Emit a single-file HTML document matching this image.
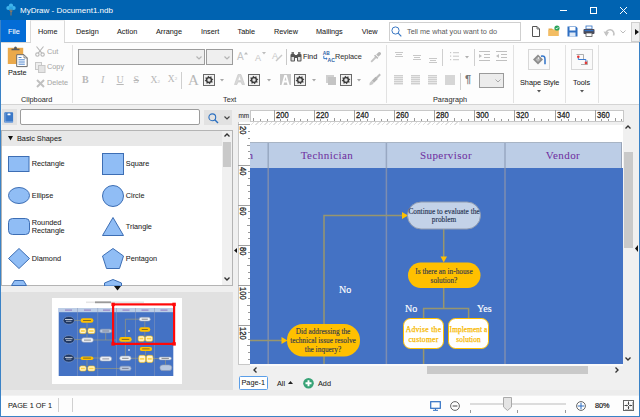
<!DOCTYPE html>
<html><head><meta charset="utf-8">
<style>
*{box-sizing:border-box;margin:0;padding:0}
html,body{width:640px;height:417px;overflow:hidden;background:#f0f0f0;font-family:"Liberation Sans",sans-serif}
.a{position:absolute}
.t{position:absolute;white-space:nowrap;font-family:"Liberation Sans",sans-serif;font-size:7.3px;line-height:10px;color:#444;-webkit-text-stroke:.05px currentColor}
.s{position:absolute;white-space:nowrap;font-family:"Liberation Serif",serif;line-height:10px}
svg{position:absolute;overflow:visible}
</style></head><body>
<!-- ============ TITLE BAR ============ -->
<div class="a" style="left:0;top:0;width:640px;height:20px;background:#0063b1"></div>
<svg style="left:6px;top:3px" width="10" height="13" viewBox="0 0 10 13"><circle cx="5" cy="2.6" r="2.1" fill="#3fb4ec"/><circle cx="2.4" cy="5" r="2.1" fill="#3fb4ec"/><circle cx="7.6" cy="5" r="2.1" fill="#3fb4ec"/><circle cx="5" cy="5.6" r="2" fill="#2aa2e0"/><path d="M5 6.5V12.5M5 8.5L3.4 7.3M5 9L6.6 7.8" stroke="#9a7a5a" stroke-width="1" fill="none"/></svg>
<div class="t" style="left:20px;top:6px;font-size:8px;color:#fff;-webkit-text-stroke:0">MyDraw - Document1.ndb</div>
<div class="a" style="left:560px;top:10px;width:7px;height:1px;background:#fff"></div>
<div class="a" style="left:590px;top:7px;width:7px;height:7px;border:1px solid #fff"></div>
<svg style="left:620px;top:7px" width="7" height="7" viewBox="0 0 7 7"><path d="M0 0L7 7M7 0L0 7" stroke="#fff" stroke-width="1"/></svg>

<!-- ============ TAB ROW ============ -->
<div class="a" style="left:0;top:20px;width:640px;height:22px;background:#fff"></div>
<div class="a" style="left:0;top:20px;width:26px;height:22px;background:#036cd6"></div>
<div class="t" style="left:8px;top:27px;color:#fff">File</div>
<div class="a" style="left:30px;top:20px;width:35px;height:23px;background:#fdfdfd;border:1px solid #dadada;border-top-color:#eee;border-bottom:none"></div>
<div class="t" style="left:38px;top:27px;color:#222">Home</div>
<div class="t" style="left:76px;top:27px;color:#222">Design</div>
<div class="t" style="left:117px;top:27px;color:#222">Action</div>
<div class="t" style="left:156px;top:27px;color:#222">Arrange</div>
<div class="t" style="left:201px;top:27px;color:#222">Insert</div>
<div class="t" style="left:237.6px;top:27px;color:#222">Table</div>
<div class="t" style="left:274px;top:27px;color:#222">Review</div>
<div class="t" style="left:316px;top:27px;color:#222">Mailings</div>
<div class="t" style="left:361.8px;top:27px;color:#222">View</div>
<!-- search -->
<div class="a" style="left:389px;top:22px;width:132px;height:19px;background:#fff;border:1px solid #cfcfcf"></div>
<svg style="left:391px;top:26px" width="11" height="11" viewBox="0 0 11 11"><circle cx="4.5" cy="4.5" r="3.6" fill="none" stroke="#3a78c4" stroke-width="1"/><path d="M7.2 7.2L10.3 10.3" stroke="#3a78c4" stroke-width="1.2"/></svg>
<div class="t" style="left:407px;top:27px;color:#5a5a5a;-webkit-text-stroke:0">Tell me what you want to do</div>
<!-- QAT -->
<svg style="left:531px;top:26px" width="10" height="11" viewBox="0 0 10 11"><path d="M1.5 .5H6L8.5 3V10.5H1.5Z" fill="#fff" stroke="#555" stroke-width="1"/><path d="M6 .5V3H8.5" fill="none" stroke="#555" stroke-width=".8"/></svg>
<svg style="left:548px;top:25px" width="12" height="12" viewBox="0 0 12 12"><path d="M0.5 3.5H4L5 4.5H10.5V11H0.5Z" fill="#e8a94a"/><path d="M0.5 5H10.5V11H0.5Z" fill="#f3bd63"/><circle cx="9" cy="3" r="2.6" fill="#2aa35c"/><path d="M7.8 3L8.7 3.9L10.3 2.2" stroke="#fff" stroke-width=".9" fill="none"/></svg>
<svg style="left:567px;top:26px" width="11" height="11" viewBox="0 0 11 11"><path d="M.5 .5H9L10.5 2V10.5H.5Z" fill="#2f6fc2"/><rect x="2.5" y="1" width="6" height="3.5" fill="#fff"/><rect x="2.5" y="6.5" width="6" height="4" fill="#dfe9f6"/></svg>
<svg style="left:583px;top:25px" width="12" height="12" viewBox="0 0 12 12"><rect x="3" y="1" width="6" height="3" fill="#fff" stroke="#2f6fc2" stroke-width=".8"/><rect x=".5" y="4" width="11" height="5" rx="1" fill="#4a4a5a"/><rect x="1.5" y="5" width="9" height="1.2" fill="#2f6fc2"/><rect x="3" y="8" width="6" height="3.5" fill="#fff" stroke="#555" stroke-width=".8"/></svg>
<svg style="left:603px;top:27px" width="12" height="10" viewBox="0 0 12 10"><path d="M3 7.5A4 4 0 1 1 10.5 8.5" fill="none" stroke="#c4c4c4" stroke-width="1.6"/><path d="M0.5 4.5L3.5 9.5L6 5Z" fill="#c4c4c4"/></svg>
<svg style="left:620px;top:30px" width="6" height="4" viewBox="0 0 6 4"><path d="M.5 .5L3 3L5.5 .5" fill="none" stroke="#bbb" stroke-width="1"/></svg>
<div class="a" style="left:631px;top:22px;width:9px;height:20px;background:#f0f0f0;border:1px solid #cfcfcf"></div>
<svg style="left:635px;top:29px" width="4" height="6" viewBox="0 0 4 6"><path d="M0 0L4 3L0 6Z" fill="#111"/></svg>

<!-- ============ RIBBON BODY ============ -->
<div class="a" style="left:0;top:42px;width:640px;height:63px;background:#fdfdfd;border-top:1px solid #d4d4d4;border-bottom:1px solid #d4d4d4"></div>


<!-- home tab merges into ribbon -->
<div class="a" style="left:31px;top:42px;width:33px;height:1px;background:#fdfdfd"></div>
<!-- group separators -->
<div class="a" style="left:72px;top:45px;width:1px;height:58px;background:#e2e2e2"></div>
<div class="a" style="left:386px;top:45px;width:1px;height:58px;background:#e2e2e2"></div>
<div class="a" style="left:513px;top:45px;width:1px;height:58px;background:#e2e2e2"></div>
<div class="a" style="left:565px;top:45px;width:1px;height:58px;background:#e2e2e2"></div>
<div class="a" style="left:598px;top:45px;width:1px;height:58px;background:#e2e2e2"></div>

<!-- Clipboard -->
<svg style="left:7px;top:46px" width="22" height="22" viewBox="0 0 22 22"><rect x=".8" y="1.8" width="15.4" height="16.2" fill="#eaa94b"/><path d="M4.5 4.2H12.5V2.8H10Q10 .6 8.5 .6Q7 .6 7 2.8H4.5Z" fill="#5a5a5a"/><path d="M9.7 8.7H17L20.2 11.9V20.6H9.7Z" fill="#fff" stroke="#6a6a6a" stroke-width="1"/><path d="M17 8.7V11.9H20.2" fill="none" stroke="#6a6a6a" stroke-width=".8"/><path d="M11.5 11.5H14.5M11.5 13.8H17.8M11.5 16H17.8M11.5 18.2H17.8" stroke="#3b78c8" stroke-width=".9"/></svg>
<div class="t" style="left:8px;top:68px;color:#222">Paste</div>
<svg style="left:35px;top:46px" width="10" height="11" viewBox="0 0 10 11"><path d="M1.5 .5L6.8 7.2M8.5 .5L3.2 7.2" stroke="#b8b8b8" stroke-width="1.1"/><circle cx="2.4" cy="8.6" r="1.7" fill="none" stroke="#b8b8b8" stroke-width="1.1"/><circle cx="7.6" cy="8.6" r="1.7" fill="none" stroke="#b8b8b8" stroke-width="1.1"/></svg>
<div class="t" style="left:47px;top:47px;color:#a8a8a8">Cut</div>
<svg style="left:35px;top:62px" width="11" height="11" viewBox="0 0 11 11"><rect x=".5" y=".5" width="6" height="7" fill="#eee" stroke="#c8c8c8"/><rect x="3.5" y="3.5" width="6.5" height="7" fill="#e4e4e4" stroke="#c8c8c8"/></svg>
<div class="t" style="left:47px;top:62px;color:#a8a8a8">Copy</div>
<svg style="left:36px;top:79px" width="9" height="9" viewBox="0 0 9 9"><path d="M1 1L8 8M8 1L1 8" stroke="#c0c0c0" stroke-width="2"/></svg>
<div class="t" style="left:47px;top:78px;color:#a8a8a8">Delete</div>
<div class="t" style="left:21px;top:94.8px;color:#333">Clipboard</div>

<!-- Text group -->
<div class="a" style="left:78px;top:49px;width:127px;height:16px;background:#efefef;border:1px solid #9c9c9c"></div>
<svg style="left:196px;top:56px" width="6" height="4" viewBox="0 0 6 4"><path d="M.5 .5L3 3L5.5 .5" fill="none" stroke="#b4b4b4" stroke-width="1.2"/></svg>
<div class="a" style="left:206px;top:49px;width:27px;height:16px;background:#efefef;border:1px solid #9c9c9c"></div>
<svg style="left:224px;top:56px" width="6" height="4" viewBox="0 0 6 4"><path d="M.5 .5L3 3L5.5 .5" fill="none" stroke="#b4b4b4" stroke-width="1.2"/></svg>
<div class="s" style="left:237px;top:52px;font-family:'Liberation Sans';font-size:10px;color:#c4c4c4">A</div>
<svg style="left:243.5px;top:52px" width="4" height="3" viewBox="0 0 4 3"><path d="M0 2.5H4L2 0Z" fill="#bdbdbd"/></svg>
<div class="s" style="left:255px;top:53px;font-family:'Liberation Sans';font-size:9px;color:#c4c4c4">A</div>
<svg style="left:261.5px;top:52px" width="4" height="3" viewBox="0 0 4 3"><path d="M0 0H4L2 2.5Z" fill="#bdbdbd"/></svg>
<svg style="left:272px;top:51px" width="11" height="11" viewBox="0 0 11 11"><text x="0" y="8" font-family="Liberation Sans" font-size="9" fill="#c8c8c8">A</text><path d="M4 10L10 4" stroke="#c8c8c8" stroke-width="1.5"/></svg>
<div class="a" style="left:286px;top:49px;width:1px;height:16px;background:#c8c8c8"></div>
<svg style="left:290px;top:51px" width="12" height="11" viewBox="0 0 12 11"><rect x="0.5" y="3" width="4.5" height="7.5" rx="1" fill="#555"/><rect x="7" y="3" width="4.5" height="7.5" rx="1" fill="#555"/><rect x="4" y="4" width="4" height="3" fill="#555"/><rect x="1.5" y="1" width="2.5" height="2" fill="#777"/><rect x="8" y="1" width="2.5" height="2" fill="#777"/><rect x="1.5" y="6" width="2.5" height="3.5" fill="#ddd"/><rect x="8" y="6" width="2.5" height="3.5" fill="#ddd"/></svg>
<div class="t" style="left:303px;top:52px;color:#222">Find</div>
<svg style="left:322px;top:49px" width="14" height="14" viewBox="0 0 14 14"><text x="0.8" y="5.6" font-family="Liberation Sans" font-size="5.6" font-weight="bold" fill="#2d5fa6" textLength="7" lengthAdjust="spacingAndGlyphs">AB</text><text x="5.6" y="12.8" font-family="Liberation Sans" font-size="5.6" font-weight="bold" fill="#2d5fa6" textLength="7.4" lengthAdjust="spacingAndGlyphs">AC</text><path d="M1.8 6.8V9.6H4.4" fill="none" stroke="#3a78c8" stroke-width="1"/><path d="M4 8.2L5.6 9.6L4 11Z" fill="#3a78c8"/></svg>
<div class="t" style="left:335px;top:52px;color:#333">Replace</div>
<svg style="left:370px;top:50px" width="11" height="13" viewBox="0 0 11 13"><path d="M1.2 11.8L6 7" stroke="#c4c4c4" stroke-width="1.8"/><path d="M4.6 5.2L7.8 8.4" stroke="#b8b8b8" stroke-width="1.6"/><path d="M6.2 4.6L8.6 2.2A1.6 1.6 0 0 1 10.8 4.4L8.4 6.8Z" fill="#b8b8b8"/></svg>

<div class="s" style="left:82px;top:75.4px;font-size:10px;font-weight:bold;color:#b8b8b8">B</div>
<div class="s" style="left:101px;top:75.4px;font-size:10px;font-style:italic;color:#b8b8b8">I</div>
<div class="s" style="left:116.5px;top:75.4px;font-size:10px;text-decoration:underline;color:#b8b8b8">U</div>
<div class="s" style="left:133.5px;top:75.4px;font-size:10px;text-decoration:line-through;color:#b8b8b8">S</div>
<div class="s" style="left:150.5px;top:75.4px;font-size:9.5px;color:#b8b8b8">X<span style="font-size:5px">2</span></div>
<div class="s" style="left:167.8px;top:74.4px;font-size:9.5px;color:#b8b8b8">X<span style="font-size:5px;vertical-align:top">2</span></div>
<div class="a" style="left:181px;top:72px;width:1px;height:17px;background:#cfcfcf"></div>

<svg style="left:203px;top:74px" width="12" height="12" viewBox="0 0 12 12"><rect x=".5" y=".5" width="11" height="11" fill="#f2f2f2" stroke="#6a6a6a"/><polygon points="10.32,5.14 9.04,6.60 9.66,8.44 7.72,8.58 6.86,10.32 5.40,9.04 3.56,9.66 3.42,7.72 1.68,6.86 2.96,5.40 2.34,3.56 4.28,3.42 5.14,1.68 6.60,2.96 8.44,2.34 8.58,4.28" fill="#3a3a3a"/><circle cx="6" cy="6" r="1.7" fill="#e4e4e4"/></svg><svg style="left:220px;top:79px" width="4" height="3" viewBox="0 0 4 3"><path d="M0 0H4L2 2.5Z" fill="#a8a8a8"/></svg><svg style="left:234px;top:74px" width="11" height="11" viewBox="0 0 11 11"><path d="M0.5 10.5L4 .5H7L10.5 10.5H8L7.2 8H3.8L3 10.5Z" fill="#d8d8d8" stroke="#c4c4c4" stroke-width=".6"/><path d="M4.4 6H6.6L5.5 2.5Z" fill="#fff"/></svg><svg style="left:248px;top:74px" width="12" height="12" viewBox="0 0 12 12"><rect x=".5" y=".5" width="11" height="11" fill="#f2f2f2" stroke="#6a6a6a"/><polygon points="10.32,5.14 9.04,6.60 9.66,8.44 7.72,8.58 6.86,10.32 5.40,9.04 3.56,9.66 3.42,7.72 1.68,6.86 2.96,5.40 2.34,3.56 4.28,3.42 5.14,1.68 6.60,2.96 8.44,2.34 8.58,4.28" fill="#3a3a3a"/><circle cx="6" cy="6" r="1.7" fill="#e4e4e4"/></svg><svg style="left:267px;top:79px" width="4" height="3" viewBox="0 0 4 3"><path d="M0 0H4L2 2.5Z" fill="#a8a8a8"/></svg><svg style="left:280px;top:74px" width="11" height="11" viewBox="0 0 11 11"><rect x="0" y="0" width="11" height="11" fill="#c8c8c8"/><path d="M1.5 11L4.3 1H6.7L9.5 11H7.5L6.9 8.5H4.1L3.5 11Z" fill="#fff"/><path d="M4.5 6.5H6.5L5.5 3Z" fill="#c8c8c8"/></svg><svg style="left:294px;top:74px" width="12" height="12" viewBox="0 0 12 12"><rect x=".5" y=".5" width="11" height="11" fill="#f2f2f2" stroke="#6a6a6a"/><polygon points="10.32,5.14 9.04,6.60 9.66,8.44 7.72,8.58 6.86,10.32 5.40,9.04 3.56,9.66 3.42,7.72 1.68,6.86 2.96,5.40 2.34,3.56 4.28,3.42 5.14,1.68 6.60,2.96 8.44,2.34 8.58,4.28" fill="#3a3a3a"/><circle cx="6" cy="6" r="1.7" fill="#e4e4e4"/></svg><svg style="left:312px;top:79px" width="4" height="3" viewBox="0 0 4 3"><path d="M0 0H4L2 2.5Z" fill="#a8a8a8"/></svg><div class="a" style="left:326px;top:75px;width:8px;height:8px;background:#d0d0d0"></div><div class="a" style="left:328px;top:77px;width:8px;height:8px;background:#c4c4c4"></div><svg style="left:340px;top:74px" width="12" height="12" viewBox="0 0 12 12"><rect x=".5" y=".5" width="11" height="11" fill="#f2f2f2" stroke="#6a6a6a"/><polygon points="10.32,5.14 9.04,6.60 9.66,8.44 7.72,8.58 6.86,10.32 5.40,9.04 3.56,9.66 3.42,7.72 1.68,6.86 2.96,5.40 2.34,3.56 4.28,3.42 5.14,1.68 6.60,2.96 8.44,2.34 8.58,4.28" fill="#3a3a3a"/><circle cx="6" cy="6" r="1.7" fill="#e4e4e4"/></svg><svg style="left:357px;top:79px" width="4" height="3" viewBox="0 0 4 3"><path d="M0 0H4L2 2.5Z" fill="#a8a8a8"/></svg><svg style="left:369px;top:73px" width="12" height="13" viewBox="0 0 12 13"><path d="M11.2 1.2L7.2 5.2" stroke="#bdbdbd" stroke-width="2"/><path d="M6.6 3.8L8.8 6L5 9.8L2.8 7.6Z" fill="#b4b4b4"/><path d="M2.8 7.6L5 9.8Q3.5 12.5 .5 12.2Q.2 9.5 2.8 7.6Z" fill="#cacaca"/></svg><div class="s" style="left:188px;top:73px;font-size:15px;line-height:14px;color:#b8b8b8">A</div><div class="t" style="left:223px;top:94.8px;color:#333">Text</div><div class="a" style="left:394.5px;top:52px;width:8px;height:1px;background:#c8c8c8"></div><div class="a" style="left:395.5px;top:54px;width:6px;height:1px;background:#c8c8c8"></div><div class="a" style="left:394.5px;top:56px;width:8px;height:1px;background:#c8c8c8"></div><div class="a" style="left:412.5px;top:55px;width:8px;height:1px;background:#c8c8c8"></div><div class="a" style="left:413.5px;top:57px;width:6px;height:1px;background:#c8c8c8"></div><div class="a" style="left:412.5px;top:59px;width:8px;height:1px;background:#c8c8c8"></div><div class="a" style="left:428.5px;top:58px;width:8px;height:1px;background:#c8c8c8"></div><div class="a" style="left:429.5px;top:60px;width:6px;height:1px;background:#c8c8c8"></div><div class="a" style="left:428.5px;top:62px;width:8px;height:1px;background:#c8c8c8"></div><div class="a" style="left:442px;top:49px;width:1px;height:17px;background:#cfcfcf"></div><svg style="left:450px;top:51px" width="9" height="10" viewBox="0 0 9 10"><g fill="#c8c8c8"><rect x="0" y="1" width="1.2" height="1.2"/><rect x="0" y="4.5" width="1.2" height="1.2"/><rect x="0" y="8" width="1.2" height="1.2"/><rect x="3" y="1.2" width="6" height="1"/><rect x="3" y="4.7" width="6" height="1"/><rect x="3" y="8.2" width="6" height="1"/></g></svg><svg style="left:465px;top:56px" width="4" height="3" viewBox="0 0 4 3"><path d="M0 0H4L2 2.5Z" fill="#b0b0b0"/></svg><div class="a" style="left:474px;top:49px;width:1px;height:17px;background:#cfcfcf"></div><svg style="left:479px;top:51px" width="12" height="10" viewBox="0 0 12 10"><g fill="#c0c0c0"><rect x="0" y="0" width="11" height="1"/><rect x="5" y="3" width="6" height="1"/><rect x="5" y="6" width="6" height="1"/><rect x="0" y="9" width="11" height="1"/><path d="M0 3L3 5L0 7Z"/></g></svg><svg style="left:496px;top:51px" width="12" height="10" viewBox="0 0 12 10"><g fill="#c0c0c0"><rect x="0" y="0" width="11" height="1"/><rect x="5" y="3" width="6" height="1"/><rect x="5" y="6" width="6" height="1"/><rect x="0" y="9" width="11" height="1"/><path d="M3 3L0 5L3 7Z"/></g></svg><div class="a" style="left:394px;top:75px;width:9px;height:10px;background:repeating-linear-gradient(#cfcfcf 0 1px,#e8e8e8 1px 2px)"></div><div class="a" style="left:411px;top:75px;width:9px;height:10px;background:repeating-linear-gradient(#cfcfcf 0 1px,#e8e8e8 1px 2px)"></div><div class="a" style="left:428px;top:75px;width:9px;height:10px;background:repeating-linear-gradient(#cfcfcf 0 1px,#e8e8e8 1px 2px)"></div><div class="a" style="left:445px;top:75px;width:10px;height:10px;background:#d6d6d6"></div><div class="a" style="left:460px;top:73px;width:1px;height:17px;background:#cfcfcf"></div><div class="s" style="left:465px;top:74px;font-family:'Liberation Sans';font-size:11px;font-weight:bold;color:#777">¶</div><div class="a" style="left:479px;top:73px;width:25px;height:15px;background:#ececec;border:1px solid #9a9a9a"></div><svg style="left:495px;top:79px" width="6" height="4" viewBox="0 0 6 4"><path d="M.5 .5L3 3L5.5 .5" fill="none" stroke="#aaa" stroke-width="1"/></svg><div class="t" style="left:433px;top:94.8px;color:#333">Paragraph</div><div class="a" style="left:528px;top:49px;width:22px;height:21px;background:#fafafa;border:1px solid #d8d8d8"></div><svg style="left:528px;top:49px" width="22" height="21" viewBox="528 49 22 21"><path d="M538 54.5L543 59.5L538 64.5L533 59.5Z" fill="#8c8c8c"/><path d="M538 57L540.5 59.5L538 62L535.5 59.5Z" fill="#b8b8b8"/><circle cx="538.6" cy="58" r=".7" fill="#fff"/><path d="M541 56.2Q545 55.2 545 59.2V64.2" fill="none" stroke="#2f72c8" stroke-width="1.5"/></svg><div class="t" style="left:520px;top:78px;color:#222">Shape Style</div><svg style="left:537px;top:90px" width="4" height="3" viewBox="0 0 4 3"><path d="M0 0H4L2 2.5Z" fill="#555"/></svg><div class="a" style="left:571px;top:49px;width:22px;height:21px;background:#fafafa;border:1px solid #d8d8d8"></div><svg style="left:571px;top:49px" width="22" height="21" viewBox="571 49 22 21"><path d="M576.5 54.5H583.5V59.5M581 64.5H587.5V60.5" fill="none" stroke="#9a9a9a" stroke-width=".8"/><path d="M578.3 57V59.5H585.9V62.8" fill="none" stroke="#3a7ad0" stroke-width="1"/><circle cx="578.3" cy="56.8" r="1.3" fill="#e53935"/><circle cx="585.9" cy="62.9" r="1.3" fill="#e53935"/></svg><div class="t" style="left:573px;top:78px;color:#222">Tools</div><svg style="left:580px;top:90px" width="4" height="3" viewBox="0 0 4 3"><path d="M0 0H4L2 2.5Z" fill="#555"/></svg>

<!-- ============ LEFT PANEL ============ -->

<!-- background of left area -->
<div class="a" style="left:1px;top:105px;width:231px;height:290px;background:#f0f0f0"></div>
<!-- book button -->
<div class="a" style="left:2px;top:109px;width:15px;height:16px;background:#e2e2e2"></div>
<svg style="left:4px;top:112px" width="10" height="11" viewBox="0 0 10 11"><rect x=".3" y=".2" width="8.8" height="10.6" rx=".8" fill="#3a78c8"/><rect x="3.5" y="1.6" width="3" height="1.6" rx=".5" fill="#fff"/><rect x="1.3" y="1" width=".8" height="9" fill="#6a9ad8"/><rect x="1" y="9.6" width="8" height=".9" fill="#a8c4ec"/></svg>
<!-- search input -->
<div class="a" style="left:20px;top:109px;width:180px;height:16px;background:#fff;border:1px solid #9c9c9c;border-radius:2px"></div>
<div class="a" style="left:204px;top:110px;width:28px;height:15px;background:#e2e2e2"></div>
<svg style="left:208px;top:113px" width="11" height="11" viewBox="0 0 11 11"><circle cx="4.3" cy="4.3" r="3.4" fill="none" stroke="#2a6fc0" stroke-width="1.1"/><path d="M6.8 6.8L10 10" stroke="#2a6fc0" stroke-width="1.4"/></svg>
<svg style="left:224px;top:116px" width="6" height="4" viewBox="0 0 6 4"><path d="M.5 .5L3 3L5.5 .5" fill="none" stroke="#444" stroke-width="1.2"/></svg>

<!-- shapes panel -->
<div class="a" style="left:1px;top:130px;width:232px;height:156px;background:#fff;border:1px solid #b4b4b4"></div>
<div class="a" style="left:2px;top:131px;width:220px;height:15px;background:#e8e8e8"></div>
<svg style="left:8px;top:136px" width="5" height="5" viewBox="0 0 5 5"><path d="M0 0H5L2.5 4.5Z" fill="#111"/></svg>
<div class="t" style="left:17px;top:134px;color:#222">Basic Shapes</div>
<!-- scrollbar -->
<div class="a" style="left:222px;top:131px;width:10px;height:154px;background:#f0f0f0"></div>
<svg style="left:224px;top:133px" width="6" height="4" viewBox="0 0 6 4"><path d="M.5 3.5L3 1L5.5 3.5" fill="none" stroke="#333" stroke-width="1.35"/></svg>
<div class="a" style="left:223px;top:142px;width:8px;height:25px;background:#c9c9c9"></div>
<svg style="left:224px;top:277px" width="6" height="4" viewBox="0 0 6 4"><path d="M.5 .5L3 3L5.5 .5" fill="none" stroke="#333" stroke-width="1.35"/></svg>

<!-- shapes -->
<svg style="left:8px;top:156px" width="22" height="16" viewBox="0 0 22 16"><rect x=".5" y=".5" width="20.5" height="15" fill="#90bdf5" stroke="#3d6eb4"/></svg>
<div class="t" style="left:31.8px;top:159px;color:#222">Rectangle</div>
<svg style="left:102px;top:153px" width="22" height="22" viewBox="0 0 22 22"><rect x=".5" y=".5" width="21" height="21" fill="#90bdf5" stroke="#3d6eb4"/></svg>
<div class="t" style="left:125.8px;top:159px;color:#222">Square</div>
<svg style="left:8px;top:187px" width="22" height="17" viewBox="0 0 22 17"><ellipse cx="11" cy="8.5" rx="10.5" ry="8" fill="#90bdf5" stroke="#3d6eb4"/></svg>
<div class="t" style="left:31.8px;top:191px;color:#222">Ellipse</div>
<svg style="left:102px;top:185px" width="22" height="22" viewBox="0 0 22 22"><circle cx="11" cy="11" r="10.5" fill="#90bdf5" stroke="#3d6eb4"/></svg>
<div class="t" style="left:125.8px;top:191px;color:#222">Circle</div>
<svg style="left:8px;top:218px" width="22" height="17" viewBox="0 0 22 17"><rect x=".5" y=".5" width="21" height="16" rx="4" fill="#90bdf5" stroke="#3d6eb4"/></svg>
<div class="t" style="left:31.8px;top:218px;color:#222">Rounded</div>
<div class="t" style="left:31.8px;top:226px;color:#222">Rectangle</div>
<svg style="left:102px;top:217px" width="22" height="19" viewBox="0 0 22 19"><path d="M11 .5L21.5 18.5H.5Z" fill="#90bdf5" stroke="#3d6eb4"/></svg>
<div class="t" style="left:125.8px;top:222px;color:#222">Triangle</div>
<svg style="left:8px;top:248px" width="22" height="21" viewBox="0 0 22 21"><path d="M11 .5L21.5 10.5L11 20.5L.5 10.5Z" fill="#90bdf5" stroke="#3d6eb4"/></svg>
<div class="t" style="left:31.8px;top:254px;color:#222">Diamond</div>
<svg style="left:102px;top:248px" width="22" height="21" viewBox="0 0 22 21"><path d="M11 .5L21.5 8L17.5 20.5H4.5L.5 8Z" fill="#90bdf5" stroke="#3d6eb4"/></svg>
<div class="t" style="left:125.8px;top:254px;color:#222">Pentagon</div>
<svg style="left:11px;top:280px" width="16" height="5" viewBox="0 0 16 5"><path d="M.5 5.5L3.5 .5H12.5L15.5 5.5Z" fill="#90bdf5" stroke="#3d6eb4"/></svg>
<svg style="left:104px;top:278.5px" width="18" height="7" viewBox="0 0 18 7"><path d="M.5 7V4L9 .5L17.5 4V7Z" fill="#90bdf5" stroke="#3d6eb4"/></svg>

<!-- thumbnail area -->
<div class="a" style="left:1px;top:286px;width:232px;height:105px;background:#e1e1e1"></div><div class="a" style="left:1px;top:286px;width:232px;height:6px;background:#efefef"></div>
<svg style="left:114px;top:286px" width="7" height="5" viewBox="0 0 7 5"><path d="M0 0H7L3.5 4.5Z" fill="#111"/></svg>
<div class="a" style="left:52px;top:298px;width:130px;height:86px;background:#fff"></div>
<svg style="left:52px;top:298px" width="130" height="86" viewBox="52 298 130 86"><rect x="86" y="301.5" width="58" height="1.6" fill="#e6e6e6"/><rect x="95" y="301.4" width="16" height="1.8" fill="#9a9a9a"/><rect x="58.7" y="308" width="114.6" height="68" fill="#4472c4"/><rect x="58.7" y="308" width="114.6" height="4.2" fill="#bccde6"/><rect x="77.5" y="308" width=".5" height="68" fill="#8898b8"/><rect x="97.6" y="308" width=".5" height="68" fill="#8898b8"/><rect x="116" y="308" width=".5" height="68" fill="#8898b8"/><rect x="135.5" y="308" width=".5" height="68" fill="#8898b8"/><rect x="154.5" y="308" width=".5" height="68" fill="#8898b8"/><rect x="65.0" y="309.6" width="7" height="1" fill="#7030a0" opacity=".55"/><rect x="84.0" y="309.6" width="7" height="1" fill="#7030a0" opacity=".55"/><rect x="103.0" y="309.6" width="7" height="1" fill="#7030a0" opacity=".55"/><rect x="122.5" y="309.6" width="7" height="1" fill="#7030a0" opacity=".55"/><rect x="141.5" y="309.6" width="7" height="1" fill="#7030a0" opacity=".55"/><rect x="160.5" y="309.6" width="7" height="1" fill="#7030a0" opacity=".55"/><path d="M74 320.4H80.6M87 322.8V328.3M87 333.6V337.8M74 339.6H81.5M93.4 340H116M105.7 332.8V340M74 358.2H80.6M93.4 358H99.8M87 360V366M95 368.5H119.6M125.4 337V319.2H139.2M144.8 321V327.3M144.8 331.7V336M125.4 341.8V356M145.5 350.9V355.3M153 358.5H159M165.5 360V364.9M131.1 358.3H138.8" fill="none" stroke="#a8a070" stroke-width=".6"/><ellipse cx="68.8" cy="320.4" rx="5.6" ry="3.9" fill="#1f3864" stroke="#8ea4cc" stroke-width=".5"/><rect x="65" y="319.09999999999997" width="7.5" height=".9" fill="#fff" opacity=".85"/><rect x="66" y="320.79999999999995" width="5.5" height=".9" fill="#fff" opacity=".6"/><ellipse cx="68.8" cy="339.6" rx="5.6" ry="3.9" fill="#1f3864" stroke="#8ea4cc" stroke-width=".5"/><rect x="65" y="338.3" width="7.5" height=".9" fill="#fff" opacity=".85"/><rect x="66" y="340.0" width="5.5" height=".9" fill="#fff" opacity=".6"/><ellipse cx="68.8" cy="358.2" rx="5.6" ry="3.9" fill="#1f3864" stroke="#8ea4cc" stroke-width=".5"/><rect x="65" y="356.9" width="7.5" height=".9" fill="#fff" opacity=".85"/><rect x="66" y="358.59999999999997" width="5.5" height=".9" fill="#fff" opacity=".6"/><rect x="80.6" y="318.2" width="12.8" height="4.6" rx="2.3" fill="#ffc000" stroke="none" stroke-width=".6"/><rect x="83.1" y="320.0" width="7.8" height="1" fill="#333" opacity=".6"/><rect x="79.7" y="328.3" width="6.4" height="5.3" rx="1.6" fill="#fff6d0" stroke="#ffc000" stroke-width=".6"/><rect x="81.0" y="330.2" width="3.8" height="1.6" fill="#ffc000" opacity=".7"/><rect x="87.9" y="328.3" width="7.0" height="5.3" rx="1.6" fill="#fff6d0" stroke="#ffc000" stroke-width=".6"/><rect x="89.2" y="330.2" width="4.4" height="1.6" fill="#ffc000" opacity=".7"/><rect x="81.5" y="337.8" width="11.9" height="4.5" rx="2.2" fill="#eef2f8" stroke="#8f9bb0" stroke-width=".6"/><rect x="84.0" y="339.6" width="6.9" height="1" fill="#444" opacity=".6"/><rect x="99.8" y="329.2" width="11.9" height="3.6" rx="1.8" fill="#b8c8e0" stroke="#8f9bb0" stroke-width=".6"/><rect x="102.3" y="330.5" width="6.9" height="1" fill="#556" opacity=".6"/><rect x="80.6" y="356.4" width="12.8" height="3.5" rx="1.8" fill="#ffc000" stroke="none" stroke-width=".6"/><rect x="83.1" y="357.6" width="7.8" height="1" fill="#333" opacity=".6"/><rect x="79.7" y="366" width="6.4" height="5.0" rx="1.6" fill="#fff6d0" stroke="#ffc000" stroke-width=".6"/><rect x="81.0" y="367.7" width="3.8" height="1.6" fill="#ffc000" opacity=".7"/><rect x="87.9" y="366" width="7.0" height="5.0" rx="1.6" fill="#fff6d0" stroke="#ffc000" stroke-width=".6"/><rect x="89.2" y="367.7" width="4.4" height="1.6" fill="#ffc000" opacity=".7"/><rect x="99.8" y="356.6" width="11.9" height="4.5" rx="2.2" fill="#eef2f8" stroke="#8f9bb0" stroke-width=".6"/><rect x="102.3" y="358.4" width="6.9" height="1" fill="#556" opacity=".6"/><rect x="119.2" y="337" width="12.5" height="4.8" rx="2.4" fill="#ffc000" stroke="none" stroke-width=".6"/><rect x="121.7" y="338.9" width="7.5" height="1" fill="#333" opacity=".6"/><rect x="139.2" y="317.3" width="11.1" height="3.8" rx="1.9" fill="#eef2f8" stroke="#8f9bb0" stroke-width=".6"/><rect x="141.7" y="318.7" width="6.1" height="1" fill="#444" opacity=".6"/><rect x="139.2" y="327.3" width="11.1" height="4.4" rx="2.2" fill="#ffc000" stroke="none" stroke-width=".6"/><rect x="141.7" y="329.0" width="6.1" height="1" fill="#333" opacity=".6"/><rect x="138.2" y="336" width="6.3" height="5.3" rx="1.6" fill="#fff6d0" stroke="#ffc000" stroke-width=".6"/><rect x="139.5" y="337.8" width="3.7" height="1.6" fill="#ffc000" opacity=".7"/><rect x="145.5" y="336" width="7.1" height="5.3" rx="1.6" fill="#fff6d0" stroke="#ffc000" stroke-width=".6"/><rect x="146.8" y="337.8" width="4.5" height="1.6" fill="#ffc000" opacity=".7"/><rect x="139.75" y="347" width="12.4" height="3.9" rx="1.9" fill="#ffc000" stroke="none" stroke-width=".6"/><rect x="142.2" y="348.4" width="7.4" height="1" fill="#333" opacity=".6"/><rect x="138.8" y="355.3" width="6.7" height="7.1" rx="1.6" fill="#fff6d0" stroke="#ffc000" stroke-width=".6"/><rect x="140.1" y="358.1" width="4.1" height="1.6" fill="#ffc000" opacity=".7"/><rect x="146.5" y="355.3" width="6.5" height="7.1" rx="1.6" fill="#fff6d0" stroke="#ffc000" stroke-width=".6"/><rect x="147.8" y="358.1" width="3.9" height="1.6" fill="#ffc000" opacity=".7"/><rect x="119.6" y="356" width="11.5" height="4.5" rx="2.2" fill="#eef2f8" stroke="#8f9bb0" stroke-width=".6"/><rect x="122.1" y="357.8" width="6.5" height="1" fill="#444" opacity=".6"/><rect x="119.6" y="366.2" width="11.5" height="4.4" rx="2.2" fill="#b8c8e0" stroke="#8f9bb0" stroke-width=".6"/><rect x="122.1" y="367.9" width="6.5" height="1" fill="#556" opacity=".6"/><rect x="159" y="357" width="12.4" height="2.9" rx="1.4" fill="#eef2f8" stroke="#8f9bb0" stroke-width=".6"/><rect x="161.5" y="357.9" width="7.4" height="1" fill="#444" opacity=".6"/><rect x="159.9" y="364.9" width="11.9" height="5.7" rx="2.9" fill="#b8c8e0" stroke="#8f9bb0" stroke-width=".6"/><rect x="128" y="330.5" width="2" height="1" fill="#fff"/><rect x="128" y="349.5" width="2" height="1" fill="#fff"/><rect x="113.1" y="304.4" width="61" height="39.5" fill="none" stroke="#ff0808" stroke-width="2.2"/><rect x="111.4" y="302.7" width="3.4" height="3.4" fill="#ff0808"/><rect x="172.4" y="302.7" width="3.4" height="3.4" fill="#ff0808"/><rect x="111.4" y="342.2" width="3.4" height="3.4" fill="#ff0808"/><rect x="172.4" y="342.2" width="3.4" height="3.4" fill="#ff0808"/></svg>
<div class="a" style="left:1px;top:390px;width:232px;height:5px;background:#ececec"></div>

<!-- splitter -->
<div class="a" style="left:233px;top:105px;width:5px;height:285px;background:#f0f0f0"></div>
<svg style="left:234px;top:248px" width="3" height="5" viewBox="0 0 3 5"><path d="M3 0V5L0 2.5Z" fill="#111"/></svg>


<!-- ============ CANVAS ============ -->
<div class="a" style="left:238px;top:105px;width:401px;height:290px;background:#f0f0f0"></div>
<div class="t" style="left:238.5px;top:110.5px;font-size:6.4px;color:#222;transform:scaleY(1.2)">mm</div>
<div class="a" style="left:250px;top:110px;width:374px;height:12px;background:#fff;border:1px solid #c8c8c8"></div>
<div class="a" style="left:253px;top:118px;width:1px;height:3px;background:#999"></div>
<div class="a" style="left:260px;top:119px;width:1px;height:2px;background:#999"></div>
<div class="a" style="left:267px;top:119px;width:1px;height:2px;background:#999"></div>
<div class="a" style="left:274px;top:110px;width:1px;height:11px;background:#a0a0a0"></div>
<div class="a" style="left:280px;top:119px;width:1px;height:2px;background:#999"></div>
<div class="a" style="left:287px;top:119px;width:1px;height:2px;background:#999"></div>
<div class="a" style="left:294px;top:118px;width:1px;height:3px;background:#999"></div>
<div class="a" style="left:300px;top:119px;width:1px;height:2px;background:#999"></div>
<div class="a" style="left:307px;top:119px;width:1px;height:2px;background:#999"></div>
<div class="t" style="left:276px;top:109px;font-size:7.6px;line-height:11px;color:#222;transform:scaleY(1.2);transform-origin:0 50%;-webkit-text-stroke:.25px #222">200</div>
<div class="a" style="left:314px;top:110px;width:1px;height:11px;background:#a0a0a0"></div>
<div class="a" style="left:320px;top:119px;width:1px;height:2px;background:#999"></div>
<div class="a" style="left:327px;top:119px;width:1px;height:2px;background:#999"></div>
<div class="a" style="left:334px;top:118px;width:1px;height:3px;background:#999"></div>
<div class="a" style="left:340px;top:119px;width:1px;height:2px;background:#999"></div>
<div class="a" style="left:347px;top:119px;width:1px;height:2px;background:#999"></div>
<div class="t" style="left:316px;top:109px;font-size:7.6px;line-height:11px;color:#222;transform:scaleY(1.2);transform-origin:0 50%;-webkit-text-stroke:.25px #222">220</div>
<div class="a" style="left:354px;top:110px;width:1px;height:11px;background:#a0a0a0"></div>
<div class="a" style="left:360px;top:119px;width:1px;height:2px;background:#999"></div>
<div class="a" style="left:367px;top:119px;width:1px;height:2px;background:#999"></div>
<div class="a" style="left:374px;top:118px;width:1px;height:3px;background:#999"></div>
<div class="a" style="left:381px;top:119px;width:1px;height:2px;background:#999"></div>
<div class="a" style="left:387px;top:119px;width:1px;height:2px;background:#999"></div>
<div class="t" style="left:356px;top:109px;font-size:7.6px;line-height:11px;color:#222;transform:scaleY(1.2);transform-origin:0 50%;-webkit-text-stroke:.25px #222">240</div>
<div class="a" style="left:394px;top:110px;width:1px;height:11px;background:#a0a0a0"></div>
<div class="a" style="left:401px;top:119px;width:1px;height:2px;background:#999"></div>
<div class="a" style="left:407px;top:119px;width:1px;height:2px;background:#999"></div>
<div class="a" style="left:414px;top:118px;width:1px;height:3px;background:#999"></div>
<div class="a" style="left:421px;top:119px;width:1px;height:2px;background:#999"></div>
<div class="a" style="left:427px;top:119px;width:1px;height:2px;background:#999"></div>
<div class="t" style="left:396px;top:109px;font-size:7.6px;line-height:11px;color:#222;transform:scaleY(1.2);transform-origin:0 50%;-webkit-text-stroke:.25px #222">260</div>
<div class="a" style="left:434px;top:110px;width:1px;height:11px;background:#a0a0a0"></div>
<div class="a" style="left:441px;top:119px;width:1px;height:2px;background:#999"></div>
<div class="a" style="left:447px;top:119px;width:1px;height:2px;background:#999"></div>
<div class="a" style="left:454px;top:118px;width:1px;height:3px;background:#999"></div>
<div class="a" style="left:461px;top:119px;width:1px;height:2px;background:#999"></div>
<div class="a" style="left:468px;top:119px;width:1px;height:2px;background:#999"></div>
<div class="t" style="left:436px;top:109px;font-size:7.6px;line-height:11px;color:#222;transform:scaleY(1.2);transform-origin:0 50%;-webkit-text-stroke:.25px #222">280</div>
<div class="a" style="left:474px;top:110px;width:1px;height:11px;background:#a0a0a0"></div>
<div class="a" style="left:481px;top:119px;width:1px;height:2px;background:#999"></div>
<div class="a" style="left:488px;top:119px;width:1px;height:2px;background:#999"></div>
<div class="a" style="left:494px;top:118px;width:1px;height:3px;background:#999"></div>
<div class="a" style="left:501px;top:119px;width:1px;height:2px;background:#999"></div>
<div class="a" style="left:508px;top:119px;width:1px;height:2px;background:#999"></div>
<div class="t" style="left:476px;top:109px;font-size:7.6px;line-height:11px;color:#222;transform:scaleY(1.2);transform-origin:0 50%;-webkit-text-stroke:.25px #222">300</div>
<div class="a" style="left:514px;top:110px;width:1px;height:11px;background:#a0a0a0"></div>
<div class="a" style="left:521px;top:119px;width:1px;height:2px;background:#999"></div>
<div class="a" style="left:528px;top:119px;width:1px;height:2px;background:#999"></div>
<div class="a" style="left:534px;top:118px;width:1px;height:3px;background:#999"></div>
<div class="a" style="left:541px;top:119px;width:1px;height:2px;background:#999"></div>
<div class="a" style="left:548px;top:119px;width:1px;height:2px;background:#999"></div>
<div class="t" style="left:516px;top:109px;font-size:7.6px;line-height:11px;color:#222;transform:scaleY(1.2);transform-origin:0 50%;-webkit-text-stroke:.25px #222">320</div>
<div class="a" style="left:555px;top:110px;width:1px;height:11px;background:#a0a0a0"></div>
<div class="a" style="left:561px;top:119px;width:1px;height:2px;background:#999"></div>
<div class="a" style="left:568px;top:119px;width:1px;height:2px;background:#999"></div>
<div class="a" style="left:575px;top:118px;width:1px;height:3px;background:#999"></div>
<div class="a" style="left:581px;top:119px;width:1px;height:2px;background:#999"></div>
<div class="a" style="left:588px;top:119px;width:1px;height:2px;background:#999"></div>
<div class="t" style="left:557px;top:109px;font-size:7.6px;line-height:11px;color:#222;transform:scaleY(1.2);transform-origin:0 50%;-webkit-text-stroke:.25px #222">340</div>
<div class="a" style="left:595px;top:110px;width:1px;height:11px;background:#a0a0a0"></div>
<div class="a" style="left:601px;top:119px;width:1px;height:2px;background:#999"></div>
<div class="a" style="left:608px;top:119px;width:1px;height:2px;background:#999"></div>
<div class="a" style="left:615px;top:118px;width:1px;height:3px;background:#999"></div>
<div class="a" style="left:621px;top:119px;width:1px;height:2px;background:#999"></div>
<div class="t" style="left:597px;top:109px;font-size:7.6px;line-height:11px;color:#222;transform:scaleY(1.2);transform-origin:0 50%;-webkit-text-stroke:.25px #222">360</div>
<div class="a" style="left:250px;top:122px;width:209px;height:3px;background:repeating-linear-gradient(135deg,#fff 0 2.2px,#e0e0e0 2.2px 3.2px)"></div>
<div class="a" style="left:238px;top:122px;width:12px;height:243px;background:#fff;border-left:1px solid #c8c8c8;border-bottom:1px solid #c8c8c8"></div>
<div class="a" style="left:238px;top:124px;width:12px;height:1px;background:#a0a0a0"></div>
<div class="a" style="left:248px;top:131px;width:2px;height:1px;background:#999"></div>
<div class="a" style="left:248px;top:138px;width:2px;height:1px;background:#999"></div>
<div class="a" style="left:247px;top:145px;width:3px;height:1px;background:#999"></div>
<div class="a" style="left:248px;top:151px;width:2px;height:1px;background:#999"></div>
<div class="a" style="left:248px;top:158px;width:2px;height:1px;background:#999"></div>
<div class="t" style="left:239px;top:125.5px;font-size:7.6px;line-height:9px;color:#222;writing-mode:vertical-rl;transform:scaleX(1.25);-webkit-text-stroke:.25px #222">20</div>
<div class="a" style="left:238px;top:165px;width:12px;height:1px;background:#a0a0a0"></div>
<div class="a" style="left:248px;top:171px;width:2px;height:1px;background:#999"></div>
<div class="a" style="left:248px;top:178px;width:2px;height:1px;background:#999"></div>
<div class="a" style="left:247px;top:185px;width:3px;height:1px;background:#999"></div>
<div class="a" style="left:248px;top:191px;width:2px;height:1px;background:#999"></div>
<div class="a" style="left:248px;top:198px;width:2px;height:1px;background:#999"></div>
<div class="t" style="left:239px;top:166.5px;font-size:7.6px;line-height:9px;color:#222;writing-mode:vertical-rl;transform:scaleX(1.25);-webkit-text-stroke:.25px #222">40</div>
<div class="a" style="left:238px;top:205px;width:12px;height:1px;background:#a0a0a0"></div>
<div class="a" style="left:248px;top:211px;width:2px;height:1px;background:#999"></div>
<div class="a" style="left:248px;top:218px;width:2px;height:1px;background:#999"></div>
<div class="a" style="left:247px;top:225px;width:3px;height:1px;background:#999"></div>
<div class="a" style="left:248px;top:232px;width:2px;height:1px;background:#999"></div>
<div class="a" style="left:248px;top:238px;width:2px;height:1px;background:#999"></div>
<div class="t" style="left:239px;top:206.5px;font-size:7.6px;line-height:9px;color:#222;writing-mode:vertical-rl;transform:scaleX(1.25);-webkit-text-stroke:.25px #222">60</div>
<div class="a" style="left:238px;top:245px;width:12px;height:1px;background:#a0a0a0"></div>
<div class="a" style="left:248px;top:252px;width:2px;height:1px;background:#999"></div>
<div class="a" style="left:248px;top:258px;width:2px;height:1px;background:#999"></div>
<div class="a" style="left:247px;top:265px;width:3px;height:1px;background:#999"></div>
<div class="a" style="left:248px;top:272px;width:2px;height:1px;background:#999"></div>
<div class="a" style="left:248px;top:278px;width:2px;height:1px;background:#999"></div>
<div class="t" style="left:239px;top:246.5px;font-size:7.6px;line-height:9px;color:#222;writing-mode:vertical-rl;transform:scaleX(1.25);-webkit-text-stroke:.25px #222">80</div>
<div class="a" style="left:238px;top:285px;width:12px;height:1px;background:#a0a0a0"></div>
<div class="a" style="left:248px;top:292px;width:2px;height:1px;background:#999"></div>
<div class="a" style="left:248px;top:298px;width:2px;height:1px;background:#999"></div>
<div class="a" style="left:247px;top:305px;width:3px;height:1px;background:#999"></div>
<div class="a" style="left:248px;top:312px;width:2px;height:1px;background:#999"></div>
<div class="a" style="left:248px;top:319px;width:2px;height:1px;background:#999"></div>
<div class="t" style="left:239px;top:286.5px;font-size:7.6px;line-height:9px;color:#222;writing-mode:vertical-rl;transform:scaleX(1.25);-webkit-text-stroke:.25px #222">100</div>
<div class="a" style="left:238px;top:325px;width:12px;height:1px;background:#a0a0a0"></div>
<div class="a" style="left:248px;top:332px;width:2px;height:1px;background:#999"></div>
<div class="a" style="left:248px;top:339px;width:2px;height:1px;background:#999"></div>
<div class="a" style="left:247px;top:345px;width:3px;height:1px;background:#999"></div>
<div class="a" style="left:248px;top:352px;width:2px;height:1px;background:#999"></div>
<div class="a" style="left:248px;top:359px;width:2px;height:1px;background:#999"></div>
<div class="t" style="left:239px;top:326.5px;font-size:7.6px;line-height:9px;color:#222;writing-mode:vertical-rl;transform:scaleX(1.25);-webkit-text-stroke:.25px #222">120</div>
<div class="a" style="left:250px;top:125px;width:373px;height:239px;background:#fff"></div>
<div class="a" style="left:250px;top:142px;width:373px;height:222px;background:#4472c4"></div>
<div class="a" style="left:621px;top:142px;width:2px;height:26px;background:#fff"></div><div class="a" style="left:250px;top:142px;width:372px;height:26px;background:#bccde6;border-top:1px solid #a8b4c4;border-right:1px solid #98a4b8"></div>



<svg style="left:250px;top:142px" width="373" height="222" viewBox="250 142 373 222"><rect x="267.45" y="143" width="1.5" height="25" fill="#98a8c2"/><rect x="267.45" y="168" width="1.5" height="196" fill="#7d8db0"/><rect x="385.65" y="143" width="1.5" height="25" fill="#98a8c2"/><rect x="385.65" y="168" width="1.5" height="196" fill="#7d8db0"/><rect x="504.25" y="143" width="1.5" height="25" fill="#98a8c2"/><rect x="504.25" y="168" width="1.5" height="196" fill="#7d8db0"/></svg><div class="a" style="left:250px;top:143px;width:17px;height:24px;overflow:hidden"><div class="s" style="left:-2.5px;top:5.5px;font-size:11px;line-height:12px;color:#7030a0;-webkit-text-stroke:.15px #7030a0">n</div></div>
<div class="s" style="left:268px;top:148.5px;width:118px;text-align:center;font-size:11px;letter-spacing:.45px;-webkit-text-stroke:.05px #7030a0;line-height:12px;color:#7030a0">Technician</div>
<div class="s" style="left:387px;top:148.5px;width:118px;text-align:center;font-size:11px;letter-spacing:.45px;-webkit-text-stroke:.05px #7030a0;line-height:12px;color:#7030a0">Supervisor</div>
<div class="s" style="left:505px;top:148.5px;width:116px;text-align:center;font-size:11px;letter-spacing:.45px;-webkit-text-stroke:.05px #7030a0;line-height:12px;color:#7030a0">Vendor</div>
<svg style="left:250px;top:142px" width="373" height="222" viewBox="250 142 373 222"><path d="M324 364V215.5H403" fill="none" stroke="#98966e" stroke-width="1.5"/><path d="M402 212L408 215.5L402 219Z" fill="#ffc000"/><path d="M443.7 229V257" fill="none" stroke="#98966e" stroke-width="1.5"/><path d="M440.5 256.5L443.7 262.5L447 256.5Z" fill="#ffc000"/><path d="M443.7 288V308.5M423.6 318V308.5H468.6V318M423.6 348.5V364" fill="none" stroke="#98966e" stroke-width="1.5"/><path d="M250 340.5H282" fill="none" stroke="#98966e" stroke-width="1.5"/><path d="M281.5 337L287.5 340.5L281.5 344Z" fill="#ffc000"/><rect x="407.5" y="202" width="73" height="27" rx="13.5" fill="#c3d2e8" stroke="#8f9bb0" stroke-width="1"/><rect x="408" y="262.5" width="72.5" height="25.5" rx="12.7" fill="#ffc000"/><rect x="403.5" y="318.5" width="40" height="30" rx="7" fill="#fff" stroke="#ffc000" stroke-width="1"/><rect x="448.5" y="318.5" width="40" height="30" rx="7" fill="#fff" stroke="#ffc000" stroke-width="1"/><rect x="287" y="324" width="73" height="32.5" rx="16" fill="#ffc000"/></svg>
<div class="s" style="left:404px;top:208px;width:80px;text-align:center;font-size:7.3px;line-height:8px;color:#2a3656;-webkit-text-stroke:.15px #2a3656">Continue to evaluate the<br>problem</div>
<div class="s" style="left:404px;top:268.3px;width:80px;text-align:center;font-size:7.3px;line-height:8.5px;color:#373d4d;-webkit-text-stroke:.15px #373d4d">Is there an in-house<br>solution?</div>
<div class="s" style="left:283px;top:328.3px;width:80px;text-align:center;font-size:7.3px;line-height:8.8px;color:#373d4d;-webkit-text-stroke:.15px #373d4d">Did addressing the<br>technical issue resolve<br>the inquery?</div>
<div class="s" style="left:400px;top:325.2px;width:47px;text-align:center;font-size:7.6px;line-height:9.6px;color:#f7b900;letter-spacing:.3px;-webkit-text-stroke:.25px #f7b900">Advise the<br>customer</div>
<div class="s" style="left:445px;top:325.2px;width:47px;text-align:center;font-size:7.3px;line-height:9.6px;color:#f7b900;letter-spacing:.1px;-webkit-text-stroke:.25px #f7b900">Implement a<br>solution</div>
<div class="s" style="left:339px;top:285px;font-size:10px;line-height:10px;color:#fff;-webkit-text-stroke:.15px #fff">No</div>
<div class="s" style="left:405px;top:304px;font-size:10px;line-height:10px;color:#fff;-webkit-text-stroke:.15px #fff">No</div>
<div class="s" style="left:477px;top:304px;font-size:10px;line-height:10px;color:#fff;-webkit-text-stroke:.15px #fff">Yes</div>
<div class="a" style="left:623px;top:122px;width:10px;height:242px;background:#f0f0f0"></div>
<svg style="left:625px;top:125px" width="6" height="4" viewBox="0 0 6 4"><path d="M.5 3.5L3 1L5.5 3.5" fill="none" stroke="#333" stroke-width="1.35"/></svg>
<div class="a" style="left:624px;top:152px;width:9px;height:96px;background:#c9c9c9"></div>
<svg style="left:625px;top:357px" width="6" height="4" viewBox="0 0 6 4"><path d="M.5 .5L3 3L5.5 .5" fill="none" stroke="#333" stroke-width="1.35"/></svg>
<svg style="left:635px;top:245px" width="3" height="7" viewBox="0 0 3 7"><path d="M3 0V7L0 3.5Z" fill="#111"/></svg>
<div class="a" style="left:250px;top:364px;width:373px;height:12px;background:#f0f0f0"></div>
<svg style="left:253px;top:367px" width="4" height="6" viewBox="0 0 4 6"><path d="M3.5 .5L1 3L3.5 5.5" fill="none" stroke="#333" stroke-width="1.35"/></svg>
<div class="a" style="left:250px;top:364px;width:373px;height:2px;background:#fafafa"></div><div class="a" style="left:427px;top:366px;width:161px;height:8px;background:#c9c9c9"></div>
<svg style="left:615px;top:367px" width="4" height="6" viewBox="0 0 4 6"><path d="M.5 .5L3 3L.5 5.5" fill="none" stroke="#333" stroke-width="1.35"/></svg>
<div class="a" style="left:239px;top:376px;width:29px;height:14px;background:#fff;border:1px solid #5a9ee8;border-radius:1.5px"></div>
<div class="t" style="left:241.5px;top:378.3px;color:#222">Page-1</div>
<div class="t" style="left:277px;top:379px;color:#222">All</div>
<svg style="left:288px;top:381px" width="5" height="3" viewBox="0 0 5 3"><path d="M0 3H5L2.5 0Z" fill="#222"/></svg>
<svg style="left:303px;top:378px" width="11" height="11" viewBox="0 0 11 11"><circle cx="5.5" cy="5.3" r="5.3" fill="#38a377"/><path d="M5.5 2.3V8.3M2.5 5.3H8.5" stroke="#fff" stroke-width="1.9"/></svg>
<div class="t" style="left:318px;top:379px;color:#222">Add</div>

<!-- ============ STATUS ============ -->
<div class="a" style="left:233px;top:390px;width:406px;height:5px;background:#ececec"></div>
<div class="a" style="left:0;top:395px;width:640px;height:21px;background:#fdfdfd;border-top:1px solid #f2f2f2"></div>
<div class="t" style="left:8px;top:401px;color:#222">PAGE 1 OF 1</div>
<div class="a" style="left:58px;top:398px;width:1px;height:14px;background:#d0d0d0"></div>
<div class="a" style="left:72px;top:398px;width:1px;height:14px;background:#d0d0d0"></div>
<svg style="left:430px;top:401px" width="11" height="10" viewBox="0 0 11 10"><rect x=".7" y=".7" width="9.6" height="6.6" fill="none" stroke="#2f6fc2" stroke-width="1.2"/><path d="M5.5 7.5V9M3 9.3H8" stroke="#2f6fc2" stroke-width="1"/></svg>
<svg style="left:450px;top:401px" width="10" height="10" viewBox="0 0 10 10"><circle cx="5" cy="5" r="4.4" fill="none" stroke="#666" stroke-width="1"/><path d="M2.6 5H7.4" stroke="#666" stroke-width="1.2"/></svg>
<div class="a" style="left:470px;top:403px;width:96px;height:2px;background:#dcdcdc"></div>
<div class="a" style="left:470px;top:410px;width:1px;height:3px;background:#999"></div>
<div class="a" style="left:517px;top:410px;width:1px;height:3px;background:#999"></div>
<div class="a" style="left:565px;top:410px;width:1px;height:3px;background:#999"></div>
<svg style="left:503px;top:397px" width="9" height="14" viewBox="0 0 9 14"><path d="M.5 .5H8.5V10L4.5 13.5L.5 10Z" fill="#e4e4e4" stroke="#aaa" stroke-width="1"/></svg>
<svg style="left:576px;top:401px" width="10" height="10" viewBox="0 0 10 10"><circle cx="5" cy="5" r="4.4" fill="none" stroke="#666" stroke-width="1"/><path d="M1.8 5H8.2M5 1.8V8.2" stroke="#2f6fc2" stroke-width="1"/></svg>
<div class="t" style="left:595px;top:401px;color:#222;-webkit-text-stroke:.2px #222">80%</div>
<svg style="left:623px;top:400px" width="11" height="11" viewBox="0 0 11 11"><rect x=".5" y=".5" width="10" height="10" fill="none" stroke="#666" stroke-width="1"/><path d="M9.5 2V9.5H2" fill="none" stroke="#999" stroke-width=".6"/><path d="M1.5 5.5H4.5M6.5 5.5H9M5.5 1.5V4.5M5.5 6.5V9" stroke="#444" stroke-width="1"/><path d="M3.5 4.5L5 5.5L3.5 6.5ZM7.5 4.5L6 5.5L7.5 6.5ZM4.5 3.5L5.5 5L6.5 3.5ZM4.5 7.5L5.5 6L6.5 7.5Z" fill="#444"/></svg>

<!-- window borders -->
<div class="a" style="left:0;top:20px;width:1px;height:397px;background:#3a82c6"></div>
<div class="a" style="left:639px;top:42px;width:1px;height:375px;background:#3a82c6"></div>
<div class="a" style="left:0;top:416px;width:640px;height:1px;background:#3a82c6"></div>
</body></html>
